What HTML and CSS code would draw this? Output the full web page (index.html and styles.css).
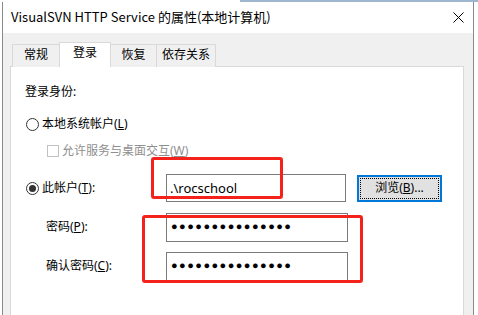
FILE: index.html
```html
<!DOCTYPE html>
<html lang="zh-CN">
<head>
<meta charset="utf-8">
<title>VisualSVN HTTP Service 的属性</title>
<link rel="stylesheet" href="styles.css">
</head>
<body>
<div class="window">
  <div class="titlebar">
    <span class="title">VisualSVN HTTP Service 的属性(本地计算机)</span>
    <svg class="close" width="11" height="11" viewBox="0 0 11 11"><path d="M0.5 0.5L10.5 10.5M10.5 0.5L0.5 10.5" stroke="#000" stroke-width="1" fill="none"/></svg>
  </div>
  <div class="dialog">
    <div class="tabs">
      <div class="tab t1">常规</div>
      <div class="tab sel">登录</div>
      <div class="tab t3">恢复</div>
      <div class="tab t4">依存关系</div>
    </div>
    <div class="panel">
      <div class="heading">登录身份:</div>
      <div class="opt r1">
        <span class="radio"></span>
        <span class="otext">本地系统帐户(<u>L</u>)</span>
      </div>
      <div class="opt chk">
        <span class="checkbox"></span>
        <span class="otext dis">允许服务与桌面交互(<u>W</u>)</span>
      </div>
      <div class="row acc">
        <div class="lbl">
          <span class="radio on"></span>
          <span class="otext">此帐户(<u>T</u>):</span>
        </div>
        <div class="field">.\rocschool</div>
        <div class="btn"><span class="focus">浏览(<u>B</u>)...</span></div>
      </div>
      <div class="row pw">
        <div class="lbl plbl">密码(<u>P</u>):</div>
        <div class="field dots">●●●●●●●●●●●●●●●</div>
      </div>
      <div class="row pw2">
        <div class="lbl plbl">确认密码(<u>C</u>):</div>
        <div class="field dots">●●●●●●●●●●●●●●●</div>
      </div>
    </div>
  </div>
</div>
<div class="mark m1"></div>
<div class="mark m2"></div>
</body>
</html>
```
FILE: styles.css
```css
html, body {
  margin: 0;
  padding: 0;
}
body {
  width: 478px;
  height: 315px;
  overflow: hidden;
  position: relative;
  background: linear-gradient(#9fb6d0, #9fb6d0) 240px 0 / 238px 2px no-repeat, #ffffff;
  font-family: "Noto Sans", "Noto Sans CJK SC", sans-serif;
  font-size: 12px;
  color: #000;
}
.window {
  margin: 2px 0 0 2px;
  width: 470px;
  height: 313px;
  border-left: 1px solid #8a8a8a;
  border-right: 1px solid #8a8a8a;
  display: flex;
  flex-direction: column;
  background: #f0f0f0;
}
.titlebar {
  height: 31px;
  background: #fff;
  display: flex;
  align-items: center;
  padding-left: 8px;
  padding-right: 9px;
}
.title {
  flex: 1;
  font-family: "Noto Sans CJK SC", "Noto Sans", sans-serif;
  font-size: 13px;
  line-height: 16px;
  margin-top: -1px;
}
.close {
  display: block;
  margin-top: -1px;
}
.dialog {
  flex: 1;
  display: flex;
  flex-direction: column;
  padding: 9px 9px 0 7px;
}
.tabs {
  display: flex;
  align-items: flex-end;
  height: 25px;
  padding-left: 2px;
  position: relative;
  z-index: 1;
  margin-bottom: -1px;
}
.tab {
  box-sizing: border-box;
  height: 23px;
  border: 1px solid #d9d9d9;
  border-bottom: none;
  background: #f0f0f0;
  display: flex;
  align-items: center;
  justify-content: center;
  line-height: 16px;
  padding-bottom: 2px;
}
.t1 { width: 47px; border-right: none; }
.t3 { width: 46px; border-left: none; }
.t4 { width: 59px; border-left: none; }
.tab.sel {
  width: 52px;
  height: 25px;
  background: #fff;
  padding-bottom: 4px;
}
.panel {
  flex: 1;
  background: #fff;
  border: 1px solid #d9d9d9;
  border-bottom: none;
  padding-left: 14px;
}
.heading {
  margin-top: 17px;
  line-height: 16px;
  height: 16px;
}
.opt {
  display: flex;
  align-items: center;
  height: 16px;
}
.r1 { margin-top: 16px; padding-left: 1px; }
.chk { margin-top: 11px; padding-left: 22px; }
.otext { line-height: 16px; white-space: nowrap; }
.dis { color: #8f8f8f; }
.radio {
  box-sizing: border-box;
  width: 13px;
  height: 13px;
  border: 1px solid #333;
  border-radius: 50%;
  margin-right: 3px;
  display: flex;
  align-items: center;
  justify-content: center;
  flex: none;
}
.radio.on::after {
  content: "";
  width: 7px;
  height: 7px;
  border-radius: 50%;
  background: #333;
}
.checkbox {
  box-sizing: border-box;
  width: 12px;
  height: 12px;
  border: 1px solid #c2c2c2;
  margin-right: 3px;
  flex: none;
}
.row {
  display: flex;
  align-items: center;
  height: 28px;
}
.acc { margin-top: 15px; }
.pw { margin-top: 11px; }
.pw2 { margin-top: 11px; }
.lbl {
  width: 141px;
  flex: none;
  display: flex;
  align-items: center;
  padding-left: 1px;
  box-sizing: border-box;
  line-height: 16px;
}
.plbl { padding-left: 21px; }
.field {
  box-sizing: border-box;
  width: 180px;
  height: 28px;
  border: 1px solid #7a7a7a;
  background: #fff;
  padding-left: 3px;
  display: flex;
  align-items: center;
  font-size: 13px;
  flex: none;
}
.pw .field, .pw2 .field { height: 29px; width: 182px; }
.dots {
  font-family: "Liberation Sans", sans-serif;
  font-size: 11px;
  letter-spacing: 1.45px;
  padding-left: 4px;
  padding-bottom: 2px;
}
.btn {
  box-sizing: border-box;
  margin-left: 11px;
  width: 85px;
  height: 27px;
  border: 2px solid #0078d7;
  background: #e1e1e1;
  padding: 1px;
  display: flex;
  flex: none;
}
.focus {
  flex: 1;
  border: 1px dotted #000;
  display: flex;
  align-items: center;
  justify-content: center;
  line-height: 16px;
}
.mark {
  position: absolute;
  border: 3px solid #f5221b;
  border-radius: 3px;
  box-sizing: border-box;
}
.m1 { left: 151px; top: 157px; width: 132px; height: 42px; }
.m2 { left: 142px; top: 215px; width: 221px; height: 68px; }
```
